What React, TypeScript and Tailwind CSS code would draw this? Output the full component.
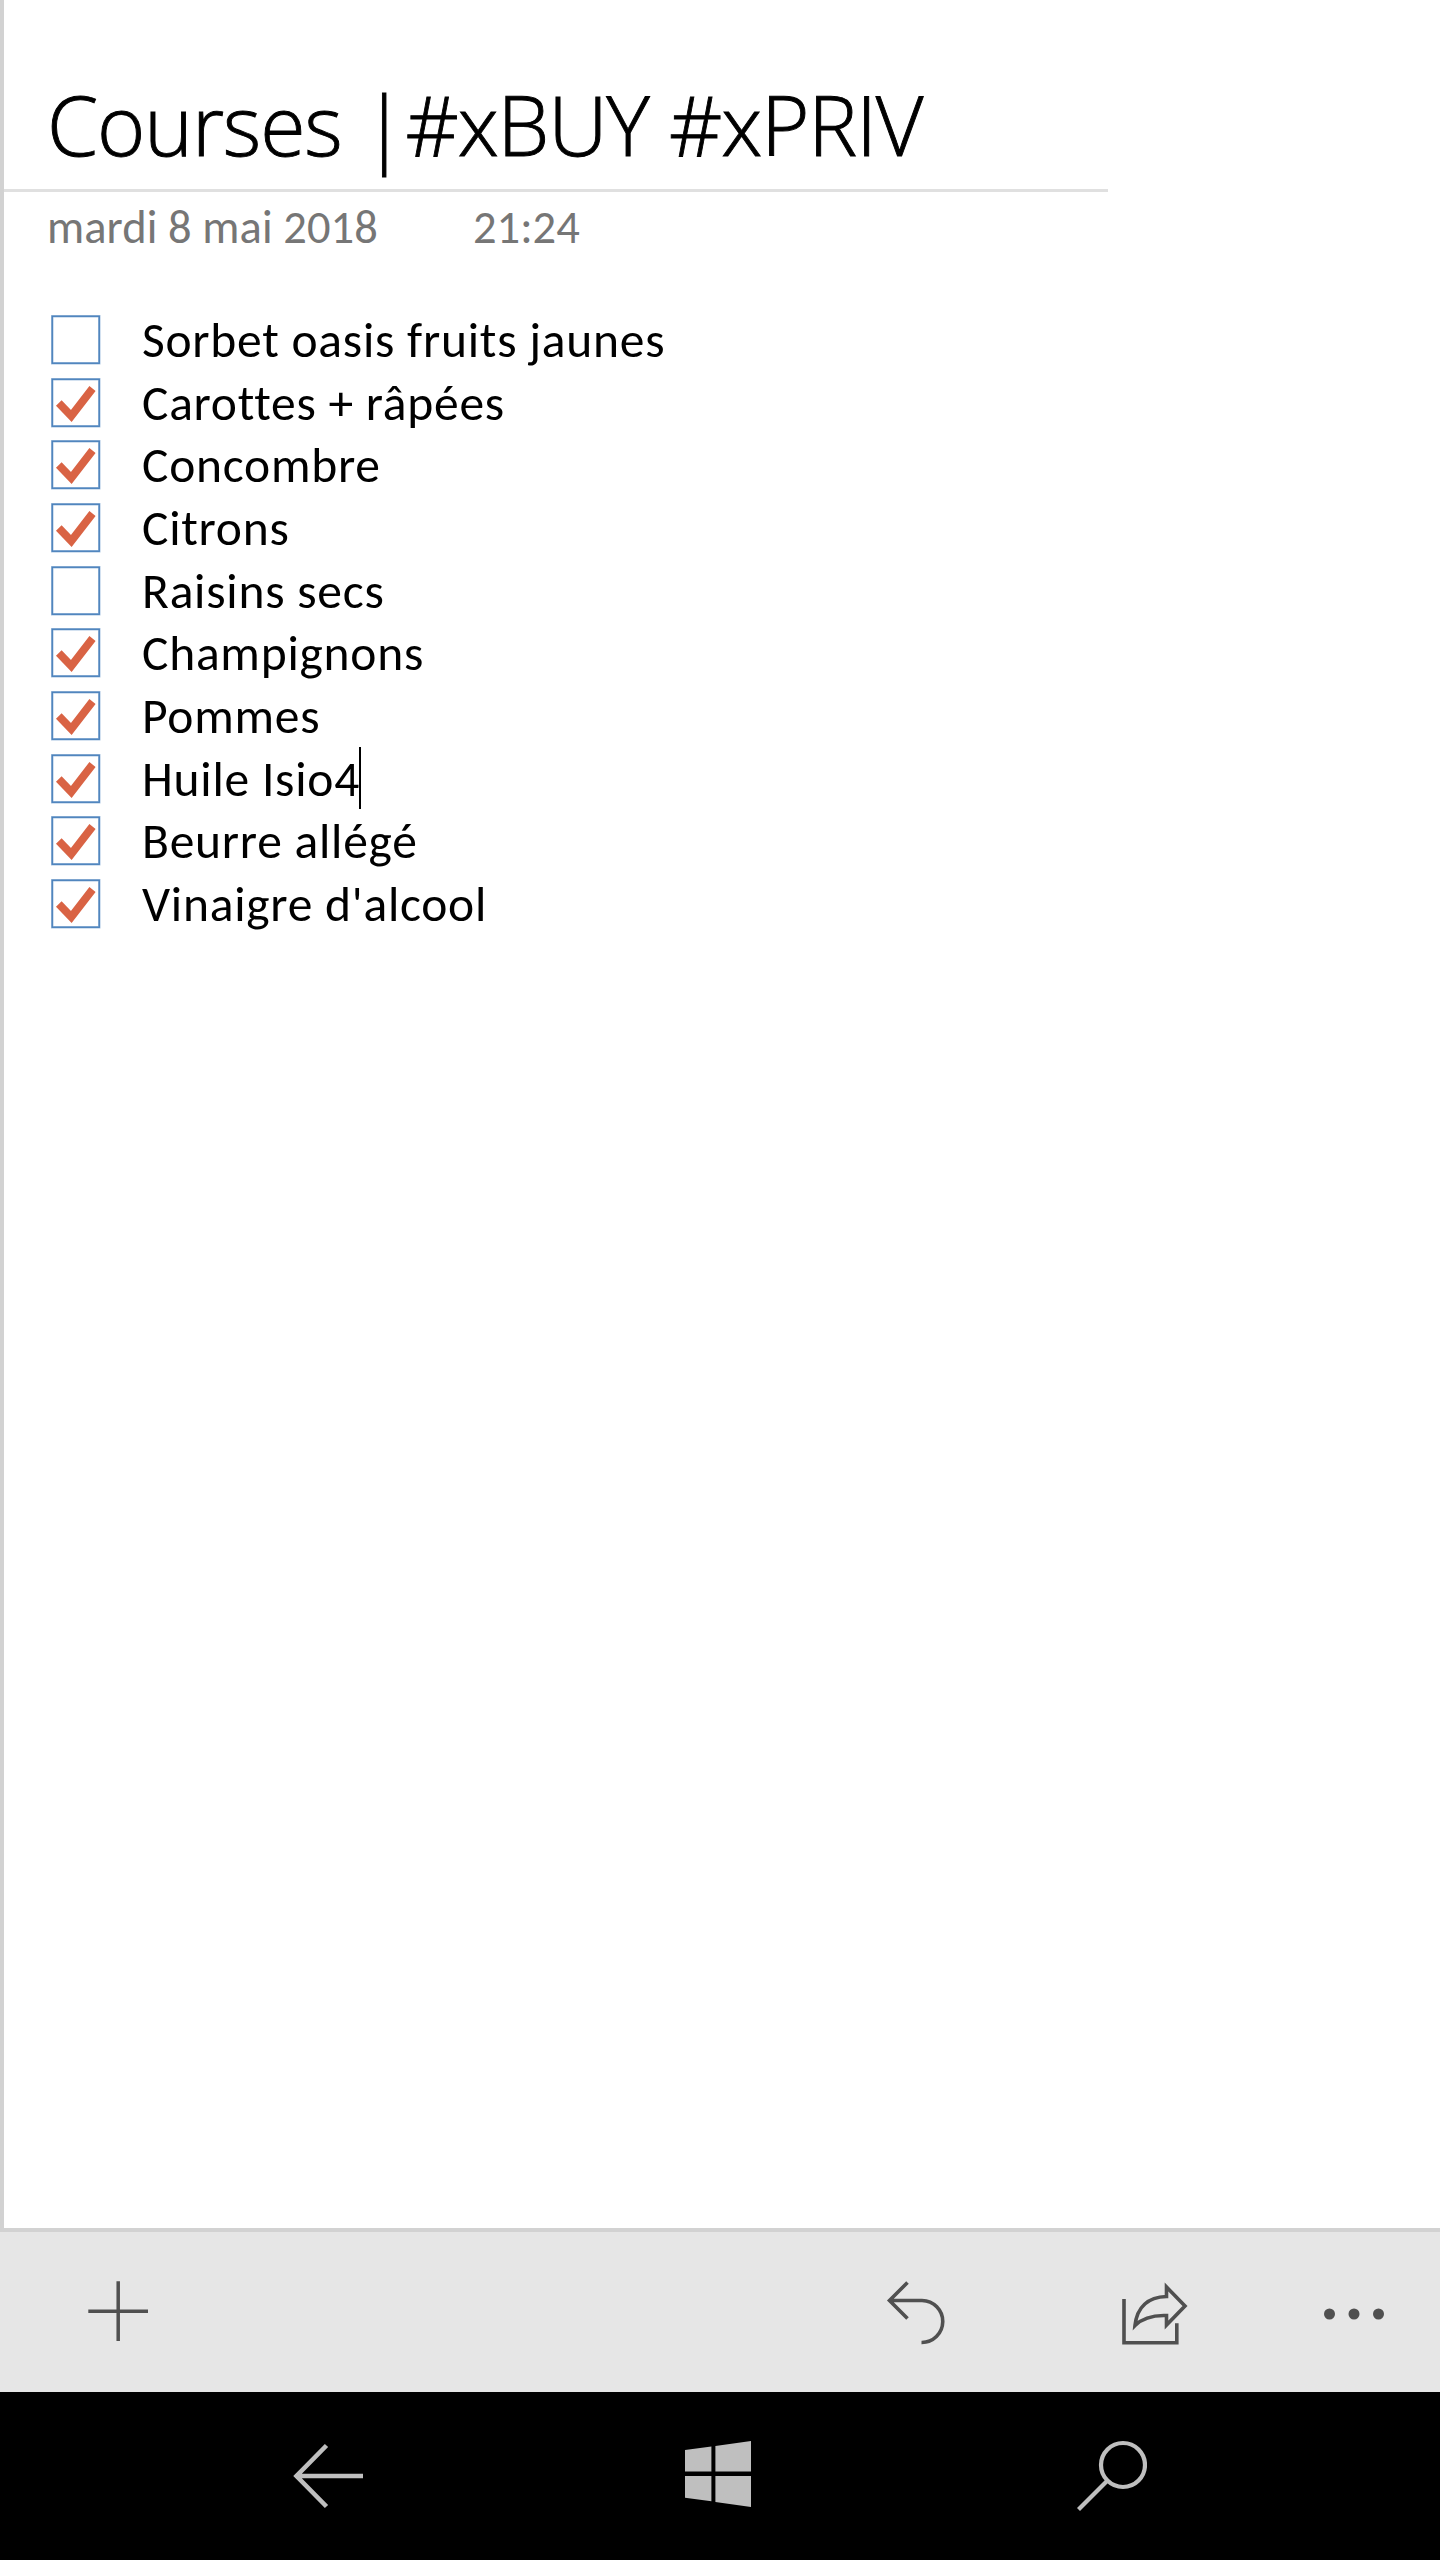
const items: { label: string; done: boolean; caret?: boolean }[] = [
  { label: "Sorbet oasis fruits jaunes", done: false },
  { label: "Carottes + râpées", done: true },
  { label: "Concombre", done: true },
  { label: "Citrons", done: true },
  { label: "Raisins secs", done: false },
  { label: "Champignons", done: true },
  { label: "Pommes", done: true },
  { label: "Huile Isio4", done: true, caret: true },
  { label: "Beurre allégé", done: true },
  { label: "Vinaigre d'alcool", done: true },
];

function Checkbox({ done }: { done: boolean }) {
  return (
    <svg width="50" height="50" viewBox="0 0 50 50" className="shrink-0" fill="none">
      <rect x="1.25" y="1.25" width="47" height="47" stroke="#9dbcdd" strokeWidth="2.4" />
      <rect x="1.25" y="1.25" width="47" height="47" stroke="#4a80bb" strokeWidth="1.3" />
      {done && <path d="M7.8 25 L20.3 38 L41.5 10.5" stroke="#d96344" strokeWidth="7.8" />}
    </svg>
  );
}

export default function App() {
  return (
    <div className="flex h-[2560px] w-[1440px] flex-col overflow-hidden bg-white font-['Carlito','Lato',sans-serif] text-black">
      <main className="flex h-[2228px] flex-col border-l-4 border-[#d2d2d2]">
        <header className="flex h-[192px] w-[1104px] items-end border-b-3 border-[#e0e0e0] pl-[43px]">
          <h1 className="pb-[9px] font-['Open_Sans',sans-serif] text-[82.5px] leading-[112px] font-light tracking-[-1.13px] whitespace-pre [-webkit-text-stroke:0.9px_black]">
            Courses |#xBUY #xPRIV
          </h1>
        </header>
        <div className="flex h-[70px] gap-[94px] pl-[43px] text-[46.5px] leading-[70px] text-[#767676]">
          <span className="w-[332px] tracking-[0.08px] whitespace-nowrap">mardi 8 mai 2018</span>
          <span>21:24</span>
        </div>
        <ul className="mt-[53px] pl-[47px]">
          {items.map((item) => (
            <li key={item.label} className="flex h-[62.67px] items-start">
              <Checkbox done={item.done} />
              <span className="ml-[41px] text-[49.5px] leading-[50px] tracking-[0.75px] whitespace-nowrap">{item.label}</span>
              {item.caret && <span className="-mt-[7px] -ml-px h-[62px] w-[2px] bg-black" />}
            </li>
          ))}
        </ul>
      </main>

      <div className="flex h-[164px] items-start border-t-4 border-[#d2d2d2] bg-[#e6e6e6] text-[#505050]">
        <svg width="60" height="60" viewBox="0 0 60 60" className="mt-[49px] ml-[88px]" fill="none" stroke="currentColor" strokeWidth="3.5">
          <path d="M0.3 30.2 H60 M30.2 0.3 V60" />
        </svg>
        <svg width="60" height="66" viewBox="0 0 60 66" className="mt-[48px] ml-[738px]" fill="none" stroke="currentColor" strokeWidth="3.6">
          <path d="M21.5 2.5 L3.5 20.5 L21.5 38.5 M3.5 20.5 H36 A21 21 0 0 1 35.5 62.5" />
        </svg>
        <svg width="70" height="66" viewBox="0 0 70 66" className="mt-[48px] ml-[174px]" fill="none" stroke="currentColor" strokeWidth="3.6">
          <path d="M4 19 V62.7 H56.8 V43.3" />
          <path d="M46.5 7 V16.5 C28 17 17 27 15 45.5 C23 37.5 33 35 46.5 35.5 V45 L65 26 Z" />
        </svg>
        <svg width="60" height="12" viewBox="0 0 60 12" className="mt-[76px] ml-[134px]" fill="currentColor">
          <circle cx="5.5" cy="6" r="5.5" />
          <circle cx="30" cy="6" r="5.5" />
          <circle cx="54.5" cy="6" r="5.5" />
        </svg>
      </div>

      <nav className="flex h-[168px] items-start bg-black text-[#bfbfbf]">
        <svg width="76" height="68" viewBox="0 0 76 68" className="mt-[50px] ml-[290px]" fill="none" stroke="currentColor" strokeWidth="4.6">
          <path d="M36.5 3.5 L6.5 34 L36.5 64.5 M6.5 34 H73" />
        </svg>
        <svg width="66" height="66" viewBox="0 0 66 66" className="mt-[49px] ml-[319px]" fill="currentColor">
          <path d="M0 9 L26.4 5.6 V30.5 H0 Z M30.4 5 L66 0 V30.5 H30.4 Z M0 35 H26.4 V60.2 L0 56.8 Z M30.4 35 H66 V66 L30.4 60.9 Z" />
        </svg>
        <svg width="72" height="72" viewBox="0 0 72 72" className="mt-[48px] ml-[324px]" fill="none" stroke="currentColor" strokeWidth="4.2">
          <circle cx="48" cy="25" r="22" />
          <path d="M32.5 40.5 L3.5 69.5" />
        </svg>
      </nav>
    </div>
  );
}
